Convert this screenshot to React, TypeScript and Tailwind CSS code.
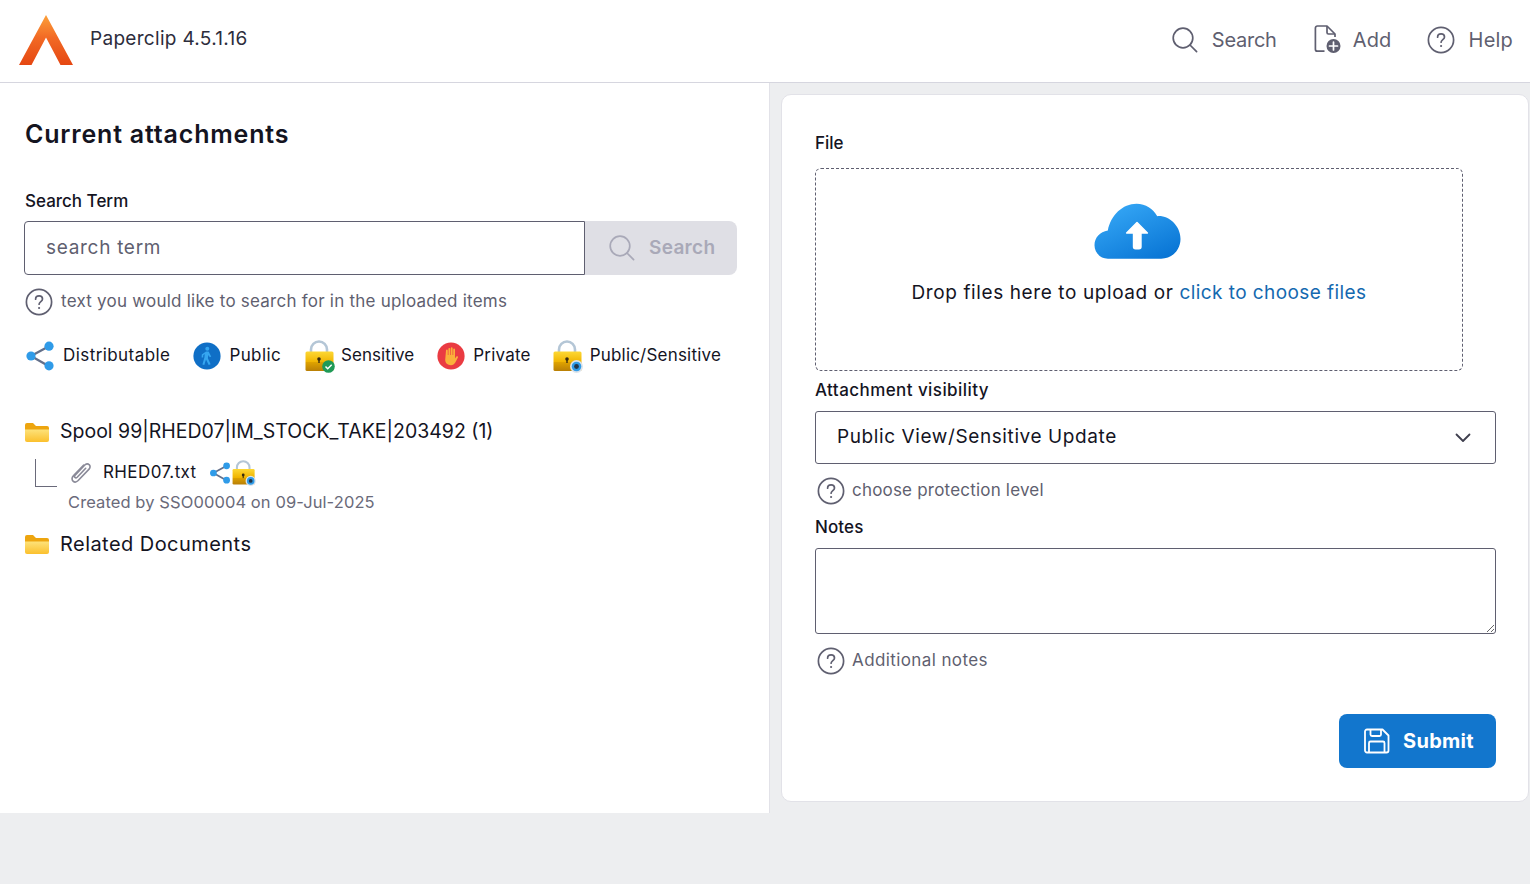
import React from "react";

const HelpIcon = ({ size = 28, className = "" }: { size?: number; className?: string }) => (
  <svg width={size} height={size} viewBox="0 0 28 28" fill="none" className={className}>
    <circle cx="14" cy="14" r="12.6" stroke="#5f5f70" strokeWidth="1.7" />
    <path d="M10.6 11.2c0-2 1.5-3.3 3.5-3.3s3.4 1.3 3.4 3c0 2.6-3.4 2.7-3.4 5.3" stroke="#5f5f70" strokeWidth="1.7" strokeLinecap="round" />
    <circle cx="14.1" cy="20" r="1.1" fill="#5f5f70" />
  </svg>
);

const SearchIcon = ({ color = "#5f5f70", size = 26 }: { color?: string; size?: number }) => (
  <svg width={size} height={size} viewBox="0 0 26 26" fill="none">
    <circle cx="11" cy="11" r="9.8" stroke={color} strokeWidth="1.7" />
    <path d="M18 18l6.6 6.6" stroke={color} strokeWidth="1.7" strokeLinecap="round" />
  </svg>
);

const AddIcon = () => (
  <svg width="28" height="29" viewBox="0 0 28 29" fill="none">
    <path d="M10.5 26.2H3.4a2 2 0 0 1-2-2V3a2 2 0 0 1 2-2h9.6l8 8v3" stroke="#5f5f70" strokeWidth="1.7" strokeLinejoin="round" />
    <path d="M13 1v6.5a1.5 1.5 0 0 0 1.5 1.5H21" stroke="#5f5f70" strokeWidth="1.7" strokeLinejoin="round" />
    <circle cx="19.5" cy="21" r="7" fill="#5f5f70" />
    <path d="M19.5 17v8M15.5 21h8" stroke="#fff" strokeWidth="1.7" strokeLinecap="round" />
  </svg>
);

const Logo = () => (
  <svg width="54" height="50" viewBox="0 0 54 50">
    <defs>
      <linearGradient id="lg" x1="0" y1="0" x2="0" y2="1">
        <stop offset="0" stopColor="#fca13a" />
        <stop offset="0.45" stopColor="#f26a25" />
        <stop offset="1" stopColor="#e54712" />
      </linearGradient>
    </defs>
    <path d="M27 0 54 50H41.5L27 22.5 12.5 50H0Z" fill="url(#lg)" />
  </svg>
);

const ShareIcon = ({ size = 30 }: { size?: number }) => (
  <svg width={size} height={size} viewBox="0 0 30 30">
    <path d="M6 15 23.5 5.5M6 15l17.5 10" stroke="#64708a" strokeWidth="2.4" fill="none" />
    <circle cx="6" cy="15" r="4.6" fill="#2f9be8" />
    <circle cx="24" cy="5.2" r="4.6" fill="#2f9be8" />
    <circle cx="24" cy="24.8" r="4.6" fill="#2f9be8" />
  </svg>
);

const PublicIcon = () => (
  <svg width="28" height="28" viewBox="0 0 28 28">
    <circle cx="14" cy="14" r="13.6" fill="#0f6fc6" />
    <circle cx="14.3" cy="6.8" r="2" fill="#35a6f0" />
    <path d="M13 9.6h2.6l2.6 5-1.4.7-1.5-2.4-.4 3.4 2.7 6-1.9.7-2.7-5.4-1.7 5.4-1.9-.5 2-7 .3-3.6-1.4 1.4-.1 2.2-1.6-.1.2-3z" fill="#35a6f0" />
  </svg>
);

const LockIcon = ({ badge, width = 30, height = 33, id }: { badge: "check" | "eye"; width?: number; height?: number; id: string }) => (
  <svg width={width} height={height} viewBox="0 0 30 33">
    <defs>
      <linearGradient id={id} x1="0" y1="0" x2="0" y2="1">
        <stop offset="0" stopColor="#fdd835" />
        <stop offset="0.55" stopColor="#f0b400" />
        <stop offset="0.55" stopColor="#dfa300" />
        <stop offset="1" stopColor="#b97f06" />
      </linearGradient>
    </defs>
    <path d="M6 13V9.500a8 8 0 0 1 16 0V13" fill="none" stroke="#b4c6d6" strokeWidth="2.6" />
    <rect x="0.500" y="11.500" width="28" height="19.500" rx="1.500" fill={`url(#${id})`} />
    <circle cx="14" cy="19" r="1.800" fill="#3a2c10" />
    <rect x="13.300" y="19" width="1.400" height="4" fill="#3a2c10" />
    {badge === "check" ? (
      <>
        <circle cx="23.500" cy="26.500" r="6.300" fill="#1f9a57" />
        <path d="M20.500 26.500l2.200 2.200 4-4" stroke="#fff" strokeWidth="1.500" fill="none" />
      </>
    ) : (
      <>
        <circle cx="23.500" cy="26.500" r="6.500" fill="#dce3ea" />
        <circle cx="23.500" cy="26.500" r="4.800" fill="#2f9be8" />
        <circle cx="23.500" cy="26.500" r="2.400" fill="#23364a" />
      </>
    )}
  </svg>
);

const PrivateIcon = () => (
  <svg width="28" height="28" viewBox="0 0 28 28">
    <circle cx="14" cy="14" r="13.6" fill="#ea3b42" />
    <path d="M9 8.5c0-1.2 1.8-1.2 1.8 0V13h.6V6.800c0-1.200 1.800-1.200 1.800 0V13h.6V6.200c0-1.200 1.800-1.200 1.800 0V13h.6V7.400c0-1.200 1.800-1.200 1.800 0v9.200l1.200-1.900c.8-1.100 2.300-.2 1.700.9l-2.600 5c-.9 1.700-2.400 2.600-4.300 2.600-3.400 0-5.800-2-5.800-5.400z" fill="#fbb03b" />
  </svg>
);

const FolderIcon = () => (
  <svg width="24" height="19" viewBox="0 0 24 19">
    <defs>
      <linearGradient id="fold" x1="0" y1="0" x2="0" y2="1">
        <stop offset="0" stopColor="#fde27a" />
        <stop offset="1" stopColor="#fbc02d" />
      </linearGradient>
    </defs>
    <path d="M0 2a2 2 0 0 1 2-2h6l3 3h11a2 2 0 0 1 2 2v3H0z" fill="#eda50f" />
    <path d="M0 6.500h24V17a2 2 0 0 1-2 2H2a2 2 0 0 1-2-2z" fill="url(#fold)" />
  </svg>
);

const ClipIcon = () => (
  <svg width="24" height="24" viewBox="0 0 22 22" fill="none">
    <path d="M13.500 3.700 4 13.600c-1.500 1.600-1.600 3.600-.3 4.800 1.300 1.200 3.200 1 4.700-.5l10-10.500c1.200-1.300 1.200-3 .1-4-1.100-1.100-2.800-1-4 .3L5.600 13.100c-.6.700-.7 1.500-.1 2 .6.600 1.400.4 2-.2l7.800-8.200" stroke="#8a8a98" strokeWidth="1.500" strokeLinecap="round" />
  </svg>
);

const CloudIcon = () => (
  <svg width="87" height="58" viewBox="0 0 88 58">
    <defs>
      <linearGradient id="cl" x1="0.15" y1="0" x2="0.85" y2="1">
        <stop offset="0" stopColor="#37a9f7" />
        <stop offset="1" stopColor="#0874d4" />
      </linearGradient>
    </defs>
    <path d="M14 57C6 57 0.500 50.500 0.500 43.500 0.500 35.500 6 30 14 28.500 17 13 29 1.500 43 1.500c9.500 0 16.500 5 21 12.500C76 13 87.500 24 87.500 37 87.500 48.500 78.500 57 68 57Z" fill="url(#cl)" />
    <path d="M43.500 20.500 54 31H47.500V45a2 2 0 0 1-2 2h-3.500a2 2 0 0 1-2-2V31H33Z" fill="#fff" stroke="#fff" strokeLinejoin="round" strokeWidth="1.500" />
  </svg>
);

const SaveIcon = () => (
  <svg width="26" height="26" viewBox="0 0 26 26" fill="none">
    <path d="M3 1.500h15.500L24.500 7.500V22.500a2 2 0 0 1-2 2H3a2 2 0 0 1-2-2V3.500a2 2 0 0 1 2-2Z" stroke="#fff" strokeWidth="1.800" strokeLinejoin="round" />
    <path d="M6.500 1.500V6.500a1.500 1.500 0 0 0 1.500 1.500h7.500a1.500 1.500 0 0 0 1.500-1.500V1.500" stroke="#fff" strokeWidth="1.800" />
    <path d="M5 24.500V15a1.500 1.500 0 0 1 1.500-1.500h12.500a1.500 1.500 0 0 1 1.500 1.500v9.500" stroke="#fff" strokeWidth="1.800" />
  </svg>
);

const Chevron = () => (
  <svg width="16" height="10" viewBox="0 0 16 10" fill="none">
    <path d="M1.500 1.500 8 8l6.500-6.500" stroke="#3f3f4e" strokeWidth="1.800" strokeLinecap="round" strokeLinejoin="round" />
  </svg>
);

const NavItem = ({ icon, label, gap, tracking }: { icon: React.ReactNode; label: string; gap: string; tracking: string }) => (
  <div className={`flex items-center ${gap}`}>
    {icon}
    <span className={`text-[20px] text-[#5f5f70] ${tracking}`}>{label}</span>
  </div>
);

const Legend = ({ icon, label, gap = "gap-2", tracking }: { icon: React.ReactNode; label: string; gap?: string; tracking: string }) => (
  <div className={`flex items-center ${gap}`}>
    {icon}
    <span className={`text-[17px] text-[#14141f] ${tracking}`}>{label}</span>
  </div>
);

export default function App() {
  return (
    <div className="min-h-[884px] bg-[#edeef0] font-['Inter',sans-serif] text-[#14141f]">
      <header className="h-[83px] bg-white border-b border-[#d6d6df] flex items-center justify-between pl-[19px] pr-[17px] pb-[3px]">
        <div className="flex items-center gap-[17px]">
          <Logo />
          <span className="text-[19px] text-[#2d2d3c] tracking-[0.3px]">Paperclip 4.5.1.16</span>
        </div>
        <div className="flex items-center">
          <NavItem icon={<SearchIcon />} label="Search" gap="gap-[14px]" tracking="tracking-[-0.25px]" />
          <div className="ml-[37px]">
            <NavItem icon={<AddIcon />} label="Add" gap="gap-[11px]" tracking="tracking-[0.2px]" />
          </div>
          <div className="ml-[35px]">
            <NavItem icon={<HelpIcon />} label="Help" gap="gap-[14px]" tracking="tracking-[0.2px]" />
          </div>
        </div>
      </header>

      <main className="flex h-[730px]">
        <section className="w-[770px] bg-white border-r border-[#e2e2e8] pl-[25px] pr-[32px] pt-[35px]">
          <h1 className="text-[25px] leading-[32px] font-semibold text-[#14141f] tracking-[0.8px]">Current attachments</h1>
          <label className="block mt-[39px] text-[17px] leading-[24px] font-medium text-[#14141f]">Search Term</label>
          <div className="flex mt-[8px] h-[54px] -ml-[1px]">
            <div className="w-[561px] border border-[#5f5f70] rounded-l-[4px] flex items-center pl-[21px] pt-[1px] text-[19px] text-[#5f5f70] tracking-[0.7px]">
              search term
            </div>
            <div className="w-[152px] bg-[#dfdfe5] rounded-r-[8px] flex items-center gap-[14px] pl-[24px] text-[19px] font-semibold text-[#a9a9b8] tracking-[0.3px]">
              <SearchIcon color="#a9a9b8" />
              <span>Search</span>
            </div>
          </div>
          <div className="flex items-center gap-[8px] mt-[13px] h-[28px] text-[17px] text-[#5f5f70]">
            <HelpIcon />
            <span className="tracking-[0.23px]">text you would like to search for in the uploaded items</span>
          </div>
          <div className="flex items-center mt-[25px] h-[30px]">
            <Legend icon={<ShareIcon />} label="Distributable" tracking="tracking-[0.43px]" />
            <div className="ml-[23px]"><Legend icon={<PublicIcon />} label="Public" tracking="tracking-[0.4px]" /></div>
            <div className="ml-[24px]"><Legend icon={<LockIcon badge="check" id="lock-a" />} label="Sensitive" gap="gap-[6px]" tracking="tracking-[0.05px]" /></div>
            <div className="ml-[23px]"><Legend icon={<PrivateIcon />} label="Private" tracking="tracking-[0.2px]" /></div>
            <div className="ml-[22px]"><Legend icon={<LockIcon badge="eye" id="lock-b" />} label="Public/Sensitive" gap="gap-[7px]" tracking="tracking-[0.2px]" /></div>
          </div>

          <div className="flex items-center gap-[11px] mt-[46px] h-[30px]">
            <FolderIcon />
            <span className="text-[19.5px]">Spool 99|RHED07|IM_STOCK_TAKE|203492 (1)</span>
          </div>
          <div className="flex mt-[12px] ml-[10px]">
            <div className="w-[22px] h-[28px] border-l border-b border-[#6a6a7a]" />
            <div className="ml-[12px] flex items-center h-[28px]">
              <ClipIcon />
              <span className="ml-[10px] text-[17px] tracking-[0.4px]">RHED07.txt</span>
              <span className="ml-[12px] flex items-center gap-[1px]">
                <ShareIcon size={22} />
                <LockIcon badge="eye" id="lock-c" width={24} height={26} />
              </span>
            </div>
          </div>
          <div className="mt-[3px] ml-[43px] text-[16.5px] leading-[24px] text-[#6a6a7a] tracking-[0.09px]">
            Created by SSO00004 on 09-Jul-2025
          </div>
          <div className="flex items-center gap-[11px] mt-[15px] h-[30px]">
            <FolderIcon />
            <span className="text-[20px] tracking-[0.45px]">Related Documents</span>
          </div>
        </section>

        <section className="flex-1 pl-[11px] pr-[1px] pt-[11px]">
          <div className="h-[708px] bg-white border border-[#e2e2e8] rounded-[10px] pl-[33px] pr-[32px] pt-[36px]">
            <label className="block text-[17px] leading-[24px] font-medium">File</label>
            <div className="mt-[13px] w-[648px] h-[203px] border border-dashed border-[#5f5f70] rounded-[6px] flex flex-col items-center pt-[33px]">
              <div className="mr-[3px] flex">
                <CloudIcon />
              </div>
              <div className="mt-[19px] text-[19px] leading-[28px] tracking-[0.6px]">
                Drop files here to upload or <span className="text-[#1469b0] tracking-[0.42px]">click to choose files</span>
              </div>
            </div>
            <label className="block mt-[7px] text-[17px] leading-[24px] font-medium tracking-[0.43px]">Attachment visibility</label>
            <div className="mt-[9px] h-[53px] border border-[#5f5f70] rounded-[3px] flex items-center justify-between pl-[21px] pr-[24px] text-[19px] tracking-[0.6px]">
              <span>Public View/Sensitive Update</span>
              <Chevron />
            </div>
            <div className="flex items-center gap-[7px] mt-[13px] ml-[2px] h-[28px] text-[17px] text-[#5f5f70]">
              <HelpIcon />
              <span className="tracking-[0.2px]">choose protection level</span>
            </div>
            <label className="block mt-[10px] text-[17px] leading-[24px] font-medium tracking-[0.1px]">Notes</label>
            <textarea className="block mt-[9px] w-full h-[86px] border border-[#5f5f70] rounded-[3px] bg-white" />
            <div className="flex items-center gap-[7px] mt-[13px] ml-[2px] h-[28px] text-[17px] text-[#5f5f70]">
              <HelpIcon />
              <span className="tracking-[0.4px]">Additional notes</span>
            </div>
            <div className="flex justify-end mt-[39px]">
              <div className="w-[157px] h-[54px] bg-[#1276cd] rounded-[8px] flex items-center gap-[13px] pl-[25px] text-white text-[20px] font-bold tracking-[0.3px]">
                <SaveIcon />
                <span>Submit</span>
              </div>
            </div>
          </div>
        </section>
      </main>
    </div>
  );
}
